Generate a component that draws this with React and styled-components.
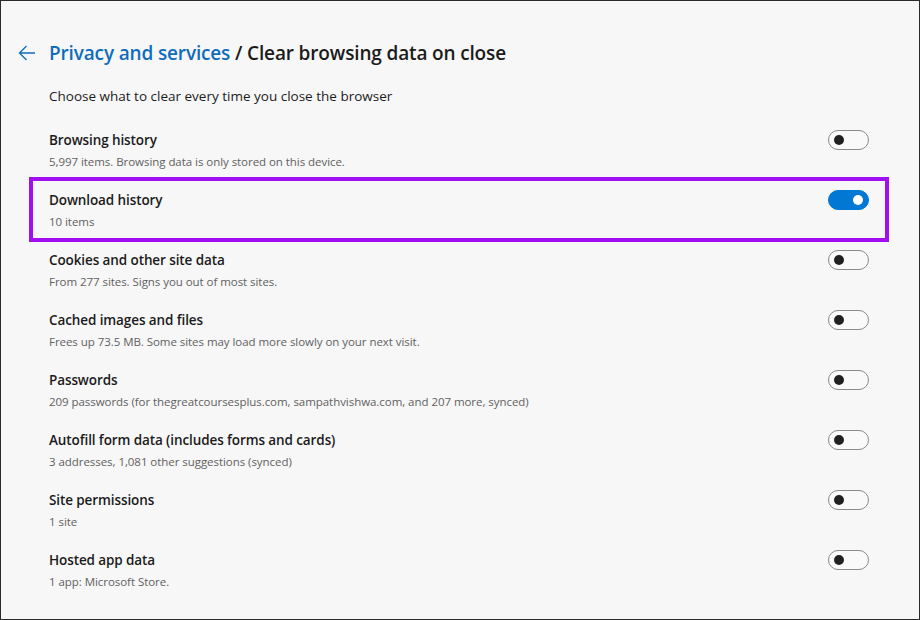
import React from "react";
import styled, { createGlobalStyle } from "styled-components";

const items = [
  { title: "Browsing history", details: "5,997 items. Browsing data is only stored on this device.", on: false },
  { title: "Download history", details: "10 items", on: true, highlight: true },
  { title: "Cookies and other site data", details: "From 277 sites. Signs you out of most sites.", on: false },
  { title: "Cached images and files", details: "Frees up 73.5 MB. Some sites may load more slowly on your next visit.", on: false },
  { title: "Passwords", details: "209 passwords (for thegreatcoursesplus.com, sampathvishwa.com, and 207 more, synced)", on: false },
  { title: "Autofill form data (includes forms and cards)", details: "3 addresses, 1,081 other suggestions (synced)", on: false },
  { title: "Site permissions", details: "1 site", on: false },
  { title: "Hosted app data", details: "1 app: Microsoft Store.", on: false },
];

const GlobalStyle = createGlobalStyle`
  html, body {
    margin: 0;
    padding: 0;
    background: #f7f7f7;
  }
  * {
    box-sizing: border-box;
  }
`;

const Page = styled.div`
  width: 920px;
  height: 620px;
  border: 1px solid #2b2b2b;
  background: #f7f7f7;
  font-family: "Open Sans", "Noto Sans", sans-serif;
  color: #1b1b1b;
  padding: 38px 34px 0 32px;
  overflow: hidden;
`;

const Header = styled.div`
  display: flex;
  align-items: center;
  gap: 12px;
  margin-left: -16px;
  height: 28px;
`;

const BackButton = styled.button`
  display: flex;
  align-items: center;
  justify-content: center;
  width: 20px;
  height: 20px;
  padding: 0;
  border: none;
  background: none;
  cursor: pointer;
`;

const Title = styled.h1`
  margin: 0;
  font-size: 19px;
  font-weight: 600;
  line-height: 28px;
  color: #1b1b1b;
  letter-spacing: -0.15px;
`;

const Crumb = styled.a`
  color: #0f6cbd;
  text-decoration: none;
`;

const Intro = styled.p`
  margin: 19px 0 15px 16px;
  font-size: 13.5px;
  line-height: 20px;
  color: #1b1b1b;
`;

const List = styled.div`
  display: flex;
  flex-direction: column;
`;

const Row = styled.div`
  position: relative;
  display: flex;
  align-items: center;
  justify-content: space-between;
  height: 60px;
  padding: 0 16px;

  &::after {
    content: "";
    display: ${(p) => (p.$highlight ? "block" : "none")};
    position: absolute;
    top: -4px;
    left: -4px;
    right: -4px;
    bottom: -1px;
    border: 4px solid #a20ef2;
    pointer-events: none;
  }
`;

const Text = styled.div`
  display: flex;
  flex-direction: column;
  gap: 4px;
  padding-bottom: 1px;
`;

const RowTitle = styled.div`
  font-size: 13.5px;
  font-weight: 600;
  line-height: 19px;
  color: #1b1b1b;
  letter-spacing: -0.1px;
`;

const RowDetails = styled.div`
  font-size: 11.5px;
  line-height: 16px;
  color: #616161;
  letter-spacing: -0.05px;
`;

const Toggle = styled.div`
  display: flex;
  align-self: flex-start;
  align-items: center;
  justify-content: ${(p) => (p.$on ? "flex-end" : "flex-start")};
  width: 41px;
  height: 20px;
  margin-top: 9px;
  padding: 0 5px;
  border-radius: 10px;
  border: 1px solid ${(p) => (p.$on ? "#0078d4" : "#8a8a8a")};
  background: ${(p) => (p.$on ? "#0078d4" : "#f9f9f9")};
  flex-shrink: 0;
`;

const Knob = styled.span`
  width: 10px;
  height: 10px;
  border-radius: 50%;
  background: ${(p) => (p.$on ? "#ffffff" : "#202020")};
`;

const ArrowIcon = () => (
  <svg width="18" height="16" viewBox="0 0 18 16" fill="none">
    <path d="M17 8H1.5M8.5 1L1.5 8l7 7" stroke="#0f6cbd" strokeWidth="1.3" />
  </svg>
);

const App = () => {
  return (
    <>
      <GlobalStyle />
      <Page>
        <Header>
          <BackButton aria-label="Back">
            <ArrowIcon />
          </BackButton>
          <Title>
            <Crumb href="#">Privacy and services</Crumb> / Clear browsing data on close
          </Title>
        </Header>
        <Intro>Choose what to clear every time you close the browser</Intro>
        <List>
          {items.map((item, index) => (
            <Row key={index} $highlight={item.highlight}>
              <Text>
                <RowTitle>{item.title}</RowTitle>
                <RowDetails>{item.details}</RowDetails>
              </Text>
              <Toggle $on={item.on}>
                <Knob $on={item.on} />
              </Toggle>
            </Row>
          ))}
        </List>
      </Page>
    </>
  );
};

export default App;
